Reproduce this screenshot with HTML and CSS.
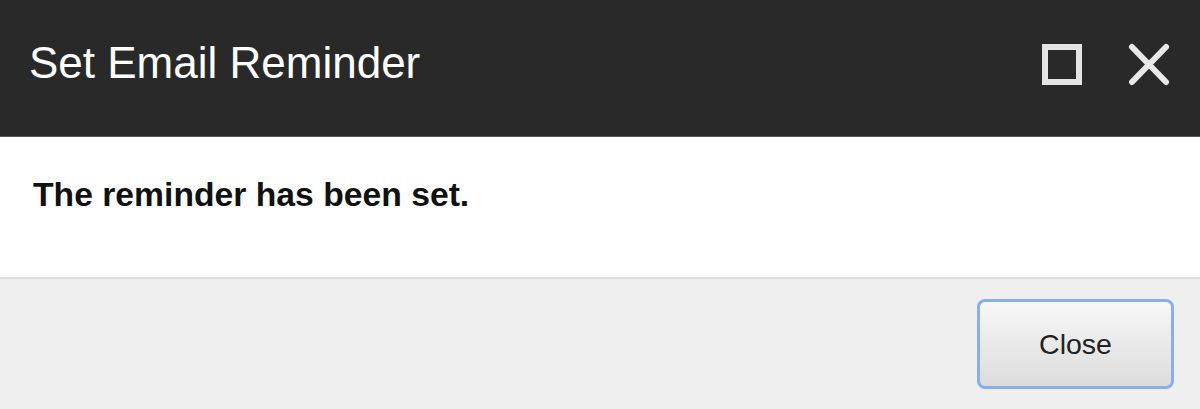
FILE: index.html
```html
<!DOCTYPE html>
<html>
<head>
    <link rel="stylesheet" href="styles.css">
    <title>Set Email Reminder</title>
</head>
<body>

    <div class="dialog">
      <div class="dialog-header">
        <h1 class="dialog-title">Set Email Reminder</h1>
        <div class="dialog-tools">
          <button class="tool-btn" title="Maximize">
            <svg width="40" height="41" viewBox="0 0 40 41">
              <rect x="3" y="3" width="34" height="35" fill="none" stroke="#e4e4e4" stroke-width="6"/>
            </svg>
          </button>
          <button class="tool-btn" title="Close">
            <svg width="42" height="43" viewBox="0 0 42 43">
              <path d="M4 4 L38 39 M38 4 L4 39" stroke="#e8e8e8" stroke-width="6" stroke-linecap="round"/>
            </svg>
          </button>
        </div>
      </div>

      <div class="dialog-body">
        <p class="message">The reminder has been set.</p>
      </div>

      <div class="dialog-footer">
        <button class="btn">Close</button>
      </div>
    </div>

</body>
</html>
```

FILE: styles.css
```css
* {
  box-sizing: border-box;
  margin: 0;
  padding: 0;
}

html, body {
  height: 100%;
}

body {
  background-color: #efefef;
  font-family: "Liberation Sans", Arial, sans-serif;
}

.dialog {
  display: flex;
  flex-direction: column;
  height: 100%;
}

/* header bar */
.dialog-header {
  align-items: flex-start;
  background-color: #292929;
  border-bottom: 1px solid #555;
  display: flex;
  height: 137px;
  justify-content: space-between;
  padding: 41px 30px 0 29px;
}

.dialog-title {
  color: #fff;
  font-size: 44px;
  font-weight: normal;
  line-height: 43px;
}

.dialog-tools {
  display: flex;
  gap: 46px;
  padding-top: 2px;
}

.tool-btn {
  background: none;
  border: 0;
  display: block;
}

.tool-btn svg {
  display: block;
}

/* body */
.dialog-body {
  background-color: #fff;
  border-bottom: 2px solid #dedede;
  height: 142px;
  padding: 40px 0 0 33px;
}

.message {
  color: #111;
  font-size: 33.7px;
  font-weight: bold;
  line-height: 34px;
}

/* footer */
.dialog-footer {
  display: flex;
  flex: 1;
  justify-content: flex-end;
  padding: 20px 26px 0 0;
}

.btn {
  background: linear-gradient(#f7f7f7, #dcdcdc);
  border: 3px solid #86aef0;
  border-radius: 8px;
  color: #222;
  font-family: "Liberation Sans", Arial, sans-serif;
  font-size: 28.5px;
  height: 90px;
  width: 197px;
}
```
